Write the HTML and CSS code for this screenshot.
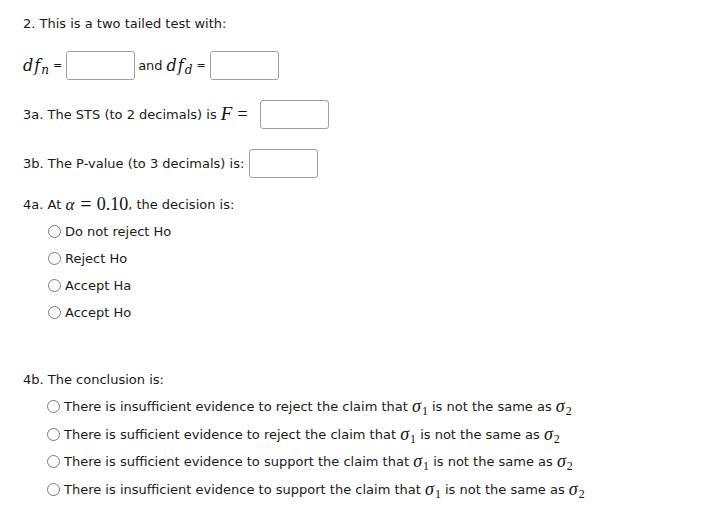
FILE: index.html
```html
<!DOCTYPE html>
<html>
<head>
<meta charset="utf-8">
<link rel="stylesheet" href="styles.css">
</head>
<body>
<div class="page">
  <div class="row r1">2. This is a two tailed test with:</div>
  <div class="row r-df">
    <span class="math"><span class="mi df">d</span><span class="mi df f">f</span><span class="sub mi">n</span></span><span class="eq">=</span>
    <span class="box"></span>
    <span class="and">and</span>
    <span class="math"><span class="mi df">d</span><span class="mi df f">f</span><span class="sub mi">d</span></span><span class="eq">=</span>
    <span class="box"></span>
  </div>
  <div class="row r-3a">3a. The STS (to 2 decimals) is <span class="mi bigF">F</span><span class="meq">=</span><span class="box box-3a"></span></div>
  <div class="row r-3b">3b. The P-value (to 3 decimals) is:<span class="box box-3b"></span></div>
  <div class="row r-4a">4a. At <span class="mi alpha">α</span><span class="meq">=</span><span class="mn">0.10</span>, the decision is:</div>
  <ul class="opts">
    <li class="opt"><span class="radio"></span>Do not reject Ho</li>
    <li class="opt"><span class="radio"></span>Reject Ho</li>
    <li class="opt"><span class="radio"></span>Accept Ha</li>
    <li class="opt"><span class="radio"></span>Accept Ho</li>
  </ul>
  <div class="row r-4b">4b. The conclusion is:</div>
  <ul class="opts opts-b">
    <li class="opt"><span class="radio"></span>There is insufficient evidence to reject the claim that <span class="math"><span class="mi sig">σ</span><span class="sub mn">1</span></span> is not the same as <span class="math"><span class="mi sig">σ</span><span class="sub mn">2</span></span></li>
    <li class="opt"><span class="radio"></span>There is sufficient evidence to reject the claim that <span class="math"><span class="mi sig">σ</span><span class="sub mn">1</span></span> is not the same as <span class="math"><span class="mi sig">σ</span><span class="sub mn">2</span></span></li>
    <li class="opt"><span class="radio"></span>There is sufficient evidence to support the claim that <span class="math"><span class="mi sig">σ</span><span class="sub mn">1</span></span> is not the same as <span class="math"><span class="mi sig">σ</span><span class="sub mn">2</span></span></li>
    <li class="opt"><span class="radio"></span>There is insufficient evidence to support the claim that <span class="math"><span class="mi sig">σ</span><span class="sub mn">1</span></span> is not the same as <span class="math"><span class="mi sig">σ</span><span class="sub mn">2</span></span></li>
  </ul>
</div>
</body>
</html>
```
FILE: styles.css
```css
html, body {
  margin: 0;
  padding: 0;
  background: #ffffff;
}
.page {
  font-family: "DejaVu Sans", sans-serif;
  font-size: 13px;
  color: #1a1a1a;
  padding-left: 23px;
  padding-top: 15px;
  display: flex;
  flex-direction: column;
}
.row {
  display: flex;
  align-items: center;
  white-space: pre;
}
.r1 { height: 16px; }
.r-df { height: 28px; margin-top: 20px; white-space: normal; }
.r-3a { height: 28px; margin-top: 21px; }
.r-3b { height: 28px; margin-top: 21px; }
.r-4a { height: 27px; margin-top: 14px; }
.r-4b { height: 27px; margin-top: 40px; }

.math {
  display: inline-flex;
  align-items: baseline;
}
.mi {
  font-family: "Liberation Serif", "DejaVu Serif", serif;
  font-style: italic;
  font-size: 18px;
  color: #111;
}
.mi.df {
  font-family: "DejaVu Serif", serif;
  font-size: 16px;
}
.f { margin-left: 1px; }
.sub {
  font-size: 11px;
  position: relative;
  top: 3px;
  margin-left: 1px;
}
.sub.mi {
  font-family: "DejaVu Serif", serif;
  font-size: 12px;
}
.mn {
  font-family: "Liberation Serif", "DejaVu Serif", serif;
  font-style: normal;
  font-size: 17px;
  color: #111;
}
.r-4a .mn { font-size: 18px; }
.sub.mn { font-size: 12px; }
.eq {
  margin: 0 4px 0 4px;
  font-size: 11px;
}
.meq {
  font-family: "Liberation Serif", "DejaVu Serif", serif;
  font-size: 18px;
  margin: 0 5px;
  color: #111;
}
.r-4a .meq { margin: 0 5px 0 6px; font-size: 20px; }
.alpha { font-size: 17px; }
.bigF { font-size: 19px; }
.and { margin: 0 4px 0 3px; }
.box {
  display: inline-block;
  width: 67px;
  height: 27px;
  border: 1px solid #a0a0a0;
  border-radius: 3px;
  box-sizing: content-box;
  flex: none;
}
.box-3a { margin-left: 7px; }
.box-3b { margin-left: 5px; }

.opts {
  list-style: none;
  margin: 0;
  padding: 0 0 0 25px;
}
.opt {
  height: 27px;
  display: flex;
  align-items: center;
  white-space: pre;
}
.opts-b { padding-left: 24px; }
.opts-b .opt { height: 27.5px; }
.radio {
  width: 11px;
  height: 11px;
  border: 1px solid #7a7a7a;
  border-radius: 50%;
  margin-right: 4px;
  flex: none;
}
.sig { font-size: 18px; }
```
